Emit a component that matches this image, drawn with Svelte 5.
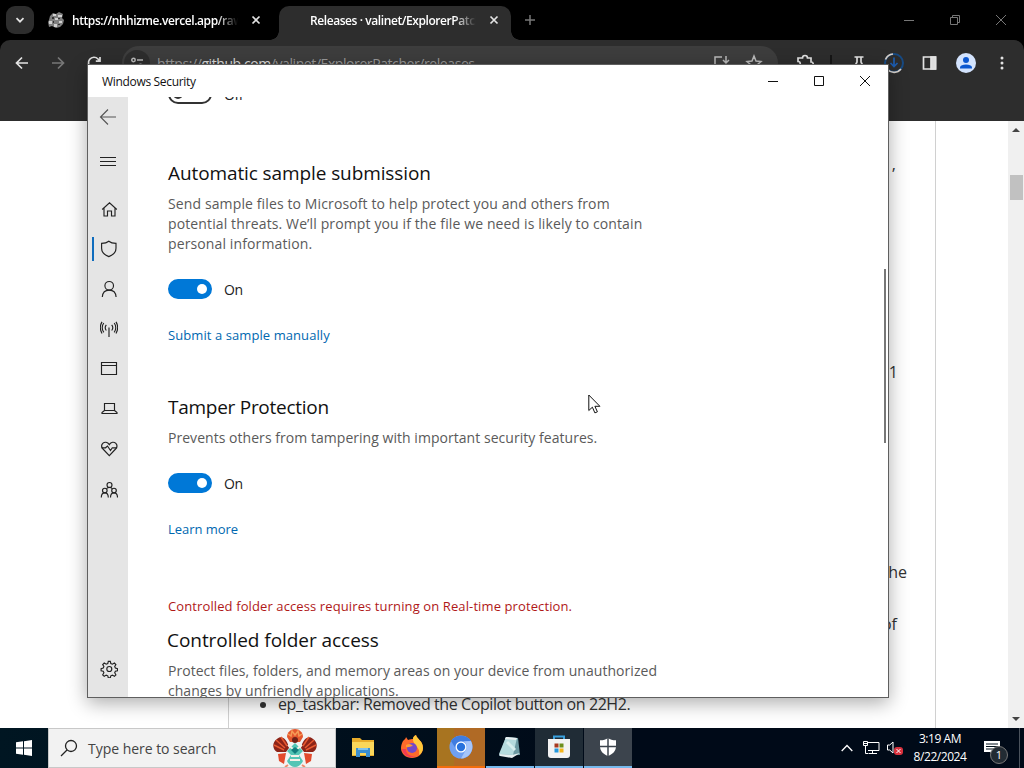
<script lang="ts">
  const tabs = [
    { title: 'https://nhhizme.vercel.app/raw', active: false },
    { title: 'Releases · valinet/ExplorerPatcher', active: true },
  ];

  const navItems = ['home', 'shield', 'account', 'network', 'app', 'device', 'health', 'family'];

  let sampleSubmission = $state(true);
  let tamperProtection = $state(true);
</script>

{#snippet navIcon(name: string)}
  <svg class="nav-icon" viewBox="0 0 18 18" width="18" height="18">
    {#if name === 'back'}
      <path d="M17 9H1.5M9 1.5 1.5 9 9 16.5" />
    {:else if name === 'menu'}
      <path d="M1 4.500h16M1 8.500h16M1 12.500h16" />
    {:else if name === 'home'}
      <path d="M2.2 9.5 9.5 2.8l7.3 6.7M4 8v8h3.5v-5h4v5H15V8" />
    {:else if name === 'shield'}
      <path d="M8.800 1.200c2 1.600 4.300 2.100 7.200 2.200v4.800c0 3.800-2.800 6.600-7.200 8.400-4.400-1.800-7.200-4.600-7.200-8.400V3.400C4.500 3.300 6.800 2.800 8.800 1.200Z" />
    {:else if name === 'account'}
      <circle cx="9.2" cy="5.8" r="4.3" />
      <path d="M2.300 17c.3-4.200 3-6.900 6.900-6.900s6.600 2.700 6.900 6.900" />
    {:else if name === 'network'}
      <path d="M9 7.500V17M6.300 10.500c-1.300-1.700-1.300-4 0-5.700M11.700 10.500c1.300-1.700 1.300-4 0-5.700M3.800 12.300c-2.100-2.600-2.100-6.700 0-9.300M14.200 12.300c2.100-2.600 2.100-6.700 0-9.300M2 13.500C0 10 0 5.200 2 1.900M16 13.500c2-3.500 2-8.300 0-11.600" />
    {:else if name === 'app'}
      <path d="M1.500 2.500h15v12h-15zM1.500 5.500h15" />
    {:else if name === 'device'}
      <path d="M4.500 3.500h10v7h-10zM4.500 10.500l-2.500 2v1h15v-1l-2.500-2" />
    {:else if name === 'health'}
      <path d="M9.300 4.600C7.500 1.700 4.500 1.800 3 3.200 1.200 5 1.400 7.300 3 9l6.300 6.700L15.600 9c1.600-1.700 1.800-4 0-5.800-1.500-1.400-4.500-1.500-6.300 1.400Z" />
      <path d="M1.500 7.800h4L7.500 6l3 4.500 1.800-2.700h4.800" />
    {:else if name === 'family'}
      <circle cx="9.500" cy="5" r="2.500" />
      <circle cx="4.800" cy="10.500" r="2.300" />
      <circle cx="14" cy="10.500" r="2.300" />
      <path d="M1.300 17.500c0-3 1.300-4.700 3.500-4.700 2 0 3.500 1.700 3.500 4.700M10.500 17.500c0-3 1.400-4.700 3.500-4.700 2.200 0 3.500 1.700 3.500 4.700M6.500 8.700c.6-1 1.600-1.300 3-1.300s2.200.3 2.800 1.300" />
    {:else if name === 'settings'}
      <circle cx="9.3" cy="9" r="2.500" />
      <path d="m8.300 1.300-.5 2.200-1.600.7-2-1.200-1.500 1.500 1.200 2-.7 1.600-2.100.5v2.100l2.100.5.7 1.600-1.200 2 1.500 1.500 2-1.200 1.600.7.500 2.100h2l.5-2.100 1.600-.7 2 1.200 1.500-1.500-1.200-2 .7-1.600 2.100-.5V8.600l-2.100-.5-.7-1.600 1.200-2L14.400 3l-2 1.200-1.600-.7-.5-2.200Z" />
    {/if}
  </svg>
{/snippet}

{#snippet toggle(on: boolean)}
  <div class="toggle-row">
    <span class="toggle" class:on><span class="knob"></span></span>
    <span class="toggle-label">{on ? 'On' : 'Off'}</span>
  </div>
{/snippet}

<div class="desktop">
  <div class="browser">
    <div class="tab-strip">
      <button class="tab-search" aria-label="Search tabs">
        <svg viewBox="0 0 10 10" width="10" height="10"><path d="m1.500 3.200 3.500 3.500 3.500-3.500" /></svg>
      </button>
      {#each tabs as tab}
        <div class="tab" class:active={tab.active}>
          {#if !tab.active}
            <svg class="favicon" viewBox="0 0 16 16" width="16" height="16">
              <path d="M2 4 5 1l3 1 3-2 4 2-1 4 2 2-1 4-3 3-4 1-4-2-3 1-1-5 1-2Z" fill="#808080" />
              <path d="M5 2h3v2H5zM10 3h4v2h-4zM1 9h3v3H1zM7 6h3v2H7zM11 9h3v2h-3zM6 12h3v3H6z" fill="#d0d0d0" />
              <path d="M4 5h2v2H4zM10 6h2v1h-2zM5 9h1v2H5zM10 12h2v1h-2z" fill="#333" />
            </svg>
          {/if}
          <span class="tab-title">{tab.title}</span>
          <svg class="tab-close" viewBox="0 0 10 10" width="10" height="10"><path d="m1.500 1.500 7 7m0-7-7 7" /></svg>
        </div>
      {/each}
      <svg class="new-tab" viewBox="0 0 12 12" width="12" height="12"><path d="M6 1v10M1 6h10" /></svg>
      <div class="browser-controls">
        <svg viewBox="0 0 12 12" width="12" height="12"><path d="M1 6.500h10" /></svg>
        <svg viewBox="0 0 12 12" width="12" height="12"><path d="M1.500 3.500h7v7h-7zM3.500 3.500v-2h7v7h-2" /></svg>
        <svg viewBox="0 0 12 12" width="12" height="12"><path d="m1 1 10 10M11 1 1 11" /></svg>
      </div>
    </div>

    <div class="toolbar">
      <div class="toolbar-nav">
        <svg viewBox="0 0 16 16" width="16" height="16"><path d="M14 8H3M8 2.500 2.500 8 8 13.500" /></svg>
        <svg class="dim" viewBox="0 0 16 16" width="16" height="16"><path d="M2 8h11M8 2.500 13.500 8 8 13.500" /></svg>
        <svg viewBox="0 0 16 16" width="16" height="16"><path d="M13 10a5.500 5.500 0 1 1-1-6l1.800 2M14 2v4.200H9.800" /></svg>
      </div>
      <div class="omnibox">
        <span class="site-info">
          <svg viewBox="0 0 16 16" width="16" height="16"><circle cx="4.500" cy="5" r="1.700" /><path d="M8 5h6M2 11h6" /><circle cx="11.500" cy="11" r="1.700" /></svg>
        </span>
        <span class="url">https://<b>github.com</b>/valinet/ExplorerPatcher/releases</span>
        <svg viewBox="0 0 18 18" width="18" height="18"><path d="M9 3H2v11h13v-2M13 2v7M10 6l3 3 3-3" /></svg>
        <svg viewBox="0 0 18 18" width="18" height="18"><path d="m9 2 2 5 5 .5-4 3.500 1.300 5L9 13.300 4.700 16 6 11 2 7.500 7 7Z" /></svg>
      </div>
      <div class="toolbar-actions">
        <svg class="puzzle" viewBox="0 0 18 18" width="18" height="18"><path d="M2 4h4.500a2.500 2.500 0 0 1 5 0H15v4a2.200 2.200 0 0 1 0 4.500V16H2v-4a2.200 2.200 0 0 0 0-4.500Z" /></svg>
        <span class="divider"></span>
        <svg class="flask" viewBox="0 0 18 18" width="18" height="18"><path d="M4.500 3h9M7 3v5l-4 8h12l-4-8V3" /></svg>
        <svg class="download" viewBox="0 0 22 22" width="22" height="22">
          <circle class="ring" cx="11" cy="11" r="9" />
          <path class="ring-progress" d="M10 2a9 9 0 0 0-7.500 5.500M4.500 17.500a9 9 0 0 0 13.500-.5" />
          <path class="arrow" d="M11 5.500v9M7.500 11l3.500 3.500 3.500-3.500" />
        </svg>
        <svg class="side-panel" viewBox="0 0 18 18" width="18" height="18"><path d="M2.500 3h12v12h-12z" /><path d="M10 3h4.500v12H10z" fill="#ddd" /></svg>
        <svg class="avatar" viewBox="0 0 20 20" width="20" height="20">
          <circle cx="10" cy="10" r="10" fill="#d3e3fd" />
          <circle cx="10" cy="7" r="3" fill="#0b57d0" />
          <path d="M4 15.500v-1.200C4.300 12.300 7 11.400 10 11.400s5.700.9 6 2.900v1.200Z" fill="#0b57d0" />
        </svg>
        <svg class="dots" viewBox="0 0 4 16" width="4" height="16"><circle cx="2" cy="3" r="1.500" /><circle cx="2" cy="8" r="1.500" /><circle cx="2" cy="13" r="1.500" /></svg>
      </div>
    </div>

    <div class="page">
      <div class="release">
        <p class="line first">,</p>
        <p class="line second">1</p>
        <p class="line third">the</p>
        <p class="line fourth">of</p>
        <ul>
          <li>ep_taskbar: Removed the Copilot button on 22H2.</li>
        </ul>
      </div>
      <div class="page-scrollbar">
        <svg viewBox="0 0 8 4" width="8" height="4"><path d="M0 4 4 0l4 4Z" /></svg>
        <span class="page-thumb"></span>
        <svg viewBox="0 0 8 4" width="8" height="4"><path d="m0 0 4 4 4-4Z" /></svg>
      </div>
    </div>
  </div>

  <div class="window">
    <div class="title-bar">
      <span class="window-title">Windows Security</span>
      <svg viewBox="0 0 12 12" width="12" height="12"><path d="M1 6.500h10" /></svg>
      <svg viewBox="0 0 12 12" width="12" height="12"><path d="M1.500 1.500h9v9h-9z" /></svg>
      <svg viewBox="0 0 12 12" width="12" height="12"><path d="m1 1 10 10M11 1 1 11" /></svg>
    </div>
    <div class="window-body">
      <nav>
        <span class="nav-item faded">{@render navIcon('back')}</span>
        <span class="nav-item menu">{@render navIcon('menu')}</span>
        {#each navItems as item}
          <span class="nav-item page-link" class:selected={item === 'shield'}>{@render navIcon(item)}</span>
        {/each}
        <span class="nav-item page-link settings">{@render navIcon('settings')}</span>
      </nav>
      <main>
        {@render toggle(false)}

        <section class="sample">
          <h2>Automatic sample submission</h2>
          <p>
            Send sample files to Microsoft to help protect you and others from<br />
            potential threats. We’ll prompt you if the file we need is likely to contain<br />
            personal information.
          </p>
          {@render toggle(sampleSubmission)}
          <span class="link">Submit a sample manually</span>
        </section>

        <section class="tamper">
          <h2>Tamper Protection</h2>
          <p>Prevents others from tampering with important security features.</p>
          {@render toggle(tamperProtection)}
          <span class="link">Learn more</span>
        </section>

        <section class="folders">
          <span class="warning">Controlled folder access requires turning on Real-time protection.</span>
          <h2>Controlled folder access</h2>
          <p>
            Protect files, folders, and memory areas on your device from unauthorized<br />
            changes by unfriendly applications.
          </p>
        </section>
      </main>
      <span class="scroll-thumb"></span>
    </div>
  </div>

  <svg class="cursor" viewBox="0 0 13 20" width="13" height="20">
    <path d="M.8 1v15.500l3.600-3.300 2.500 5.700 2.500-1.100-2.500-5.500h5Z" fill="#fff" stroke="#111" />
  </svg>

  <div class="taskbar">
    <div class="start">
      <svg viewBox="0 0 16 16" width="16" height="16"><path d="M0 2.300 7 1.300v6.300H0zM8 1.200 16 0v7.600H8zM0 8.500h7v6.200l-7-1zM8 8.500h8V16l-8-1.200z" /></svg>
    </div>
    <div class="search">
      <svg class="lens" viewBox="0 0 18 18" width="18" height="18"><circle cx="11" cy="7" r="5.500" /><path d="m7 11-6 6" /></svg>
      <span>Type here to search</span>
      <svg class="ornament" viewBox="0 0 44 38" width="44" height="38">
        <path d="M14 8c0-5 4-8 8-8s8 3 8 8l-3 5H17Z" fill="#e4572e" />
        <path d="m15 5 3 2 1-5 3 4 3-4 1 5 3-2" fill="none" stroke="#f59a55" stroke-width="1.500" />
        <path d="M16 19C14 9 8 6 4 10c-5 3-5 10 0 13h9Z" fill="#8c2418" />
        <path d="M28 19c2-10 8-13 12-9 5 3 5 10 0 13h-9Z" fill="#8c2418" />
        <path d="m3 11 9 8M1 16l10 5M8 8l6 9M41 11l-9 8M43 16l-10 5M36 8l-6 9" stroke="#e8592f" stroke-width="1.500" />
        <path d="m5 25 8-1-2 11-5-3ZM39 25l-8-1 2 11 5-3Z" fill="#e34a2c" />
        <circle cx="22" cy="11" r="3" fill="#6d2018" />
        <path d="m22 14-8 8 4 4-4 6c2 4 5 6 8 6s6-2 8-6l-4-6 4-4Z" fill="#54c5b5" />
        <path d="m15 16 5 4M29 16l-5 4M18 27h8M17 31h10" stroke="#f5f1e8" stroke-width="2" />
        <path d="m18 21 4 4 4-4-4-3Z" fill="#127e7d" />
        <path d="m15 36-3 2M29 36l3 2" stroke="#f28b6b" stroke-width="2" />
      </svg>
    </div>
    <div class="apps">
      <span class="app">
        <svg viewBox="0 0 24 24" width="24" height="24">
          <path d="M1 3h8l2 2h12v16H1Z" fill="#e9ad2b" /><path d="M1 7h22v13H1Z" fill="#fbd75b" />
          <path d="M5 13h14v9h-4v-4H9v4H5Z" fill="#3b8fd1" /><path d="M7 13h10v2H7z" fill="#7fc3ef" />
        </svg>
      </span>
      <span class="app">
        <svg viewBox="0 0 24 24" width="24" height="24">
          <path d="M3 6c2-2 3-3 3-4l2 3c2-1 4-1 5-1 0-2 1-3 3-4 1 4 7 6 7 13 0 6-5 10-11 10S1 19 1 13c0-3 1-5 2-7Z" fill="#ff6a2b" />
          <path d="M13 4c0-2 1-3 3-4 1 4 7 6 7 13 0 3-2 6-4 7 1-5-1-7-3-9-2-3-3-4-3-7Z" fill="#ffc83a" />
          <path d="M2 14c1 7 8 10 14 7-7 1-10-3-10-7Z" fill="#f33a54" />
          <circle cx="12" cy="13" r="5" fill="#7448c8" /><path d="M6 10c3-2 5-1 7 1-3 0-4 2-7 1Z" fill="#ff9b32" />
        </svg>
      </span>
      <span class="app chromium">
        <svg viewBox="0 0 24 24" width="24" height="24">
          <circle cx="12" cy="12" r="11.500" fill="#6fa0f3" />
          <path d="M2 6C6-1 18-1 22 6H12a6 6 0 0 0-5 8Z" fill="#3f7ce0" />
          <path d="M22 6c4 8-1 17-10 17.500l5-9A6 6 0 0 0 15 6.500Z" fill="#a5c5fb" />
          <circle cx="12" cy="12" r="5.500" fill="#fff" /><circle cx="12" cy="12" r="4.200" fill="#2872dd" />
        </svg>
      </span>
      <span class="app notepad">
        <svg viewBox="0 0 24 24" width="24" height="24">
          <path d="m8 2 12 1 2 17-21 1Z" fill="#6d9aa3" /><path d="m8 2 11 1-4 17-14-1Z" fill="#b5dadd" />
          <path d="m8 2 11 1-1 2L7 4ZM1 19l13 1 8-2-8 5-12-2Z" fill="#e7eef0" />
          <path d="m9 7 8 8" stroke="#d8eeee" stroke-width="3" />
        </svg>
      </span>
      <span class="app store">
        <svg viewBox="0 0 24 24" width="24" height="24">
          <path d="M7 6V1.500h10V6" fill="none" stroke="#3aa0dd" stroke-width="2" />
          <path d="M1 4h22v16q0 3-3 3H4q-3 0-3-3Z" fill="#f3f3f3" />
          <path d="M7.500 8.500h4v4h-4z" fill="#a8391f" /><path d="M12.500 8.500h4v4h-4z" fill="#6d8f1c" />
          <path d="M7.500 13.500h4v4h-4z" fill="#2597dc" /><path d="M12.500 13.500h4v4h-4z" fill="#f5b51b" />
        </svg>
      </span>
      <span class="app security">
        <svg viewBox="0 0 18 20" width="18" height="20">
          <path d="M9 1c2 1.600 4.500 2.300 8 2.300V9c0 5-3 8-8 10-5-2-8-5-8-10V3.300C4.500 3.300 7 2.600 9 1Z" fill="#fff" />
          <path d="M9 1v18M1 9.500h16" stroke="#3c444d" stroke-width="1.500" />
        </svg>
      </span>
    </div>
    <div class="tray">
      <svg class="chevron" viewBox="0 0 12 8" width="12" height="8"><path d="m.7 7 5.300-5.500L11.300 7" /></svg>
      <svg class="monitor" viewBox="0 0 18 16" width="18" height="16"><path d="M6 2.500h11v8H6M10.500 10.500v3M7 13.500h8M1.500 1.500h4v4h-4zM3.500 5.500v8h3M1.500 3.500h4" /></svg>
      <svg class="speaker" viewBox="0 0 18 16" width="18" height="16">
        <path d="M1.500 5h2.200L7 2v11l-3.300-3H1.500z" />
        <rect x="8" y="7" width="9" height="8" rx="3" fill="#d9313d" stroke="none" /><path d="m10.500 9 4 4m0-4-4 4" />
      </svg>
      <span class="clock"><span>3:19 AM</span><span>8/22/2024</span></span>
      <span class="notifications">
        <svg viewBox="0 0 18 17" width="18" height="17"><path d="M1 1h16v11h-6v4l-4-4H1Z" fill="#fff" stroke="none" /><path d="M3 4h12M3 6.500h12M3 9h9" stroke="#00101c" /></svg>
        <span class="badge">1</span>
      </span>
      <span class="show-desktop"></span>
    </div>
  </div>
</div>

<style>
  :global(body) {
    margin: 0;
    overflow: hidden;
  }

  .desktop {
    position: relative;
    display: flex;
    flex-direction: column;
    width: 1024px;
    height: 768px;
    overflow: hidden;
    background: #fff;
    font-family: 'Open Sans', 'Noto Sans', sans-serif;
  }

  svg {
    display: block;
    flex: none;
  }

  h2,
  p,
  ul {
    margin: 0;
    font-weight: 400;
  }

  .browser {
    display: flex;
    flex: 1;
    flex-direction: column;
    min-height: 0;
  }

  .tab-strip {
    display: flex;
    align-items: center;
    box-sizing: border-box;
    height: 40px;
    padding-left: 6px;
    background: #000;
  }

  .tab-strip svg,
  .toolbar svg {
    fill: none;
    stroke: #e3e3e3;
    stroke-width: 1.7;
  }

  .tab-search {
    display: grid;
    place-items: center;
    width: 28px;
    height: 28px;
    padding: 0;
    border: 0;
    border-radius: 9px;
    background: #2d2d2d;
  }

  .tab {
    position: relative;
    display: flex;
    align-items: center;
    box-sizing: border-box;
    align-self: flex-end;
    width: 232px;
    height: 34px;
    padding: 0 12px 6px 14px;
    color: #fff;
  }

  .tab:not(.active) {
    width: 245px;
    padding-right: 18px;
  }

  .tab .favicon {
    stroke: none;
  }

  .tab-title {
    flex: 1;
    margin-left: 8px;
    overflow: hidden;
    font-size: 12px;
    font-weight: 600;
    letter-spacing: -0.42px;
    white-space: nowrap;
    mask-image: linear-gradient(90deg, #000 87%, transparent);
  }

  .tab.active {
    padding-left: 23px;
    border-radius: 10px 10px 0 0;
    background: #2d2d2d;
  }

  /* flared feet of the selected tab */
  .tab.active::before,
  .tab.active::after {
    position: absolute;
    bottom: 0;
    width: 9px;
    height: 9px;
    content: '';
  }

  .tab.active::before {
    right: 100%;
    background: radial-gradient(circle at 0 0, transparent 8.500px, #2d2d2d 9px);
  }

  .tab.active::after {
    left: 100%;
    background: radial-gradient(circle at 100% 0, transparent 8.500px, #2d2d2d 9px);
  }

  .tab-close {
    margin-left: 13px;
  }

  .tab-strip .new-tab {
    margin-left: 13px;
    stroke: #777;
    stroke-width: 1.5;
  }

  .browser-controls {
    display: flex;
    gap: 34px;
    margin-left: auto;
    padding-right: 17px;
  }

  .browser-controls svg {
    stroke: #777;
    stroke-width: 1;
  }

  .toolbar {
    display: flex;
    box-sizing: border-box;
    height: 81px;
    padding: 6px 20px 0 14px;
    border-radius: 10px 10px 0 0;
    background: #2d2d2d;
  }

  .toolbar-nav {
    display: flex;
    align-items: center;
    gap: 20px;
    height: 34px;
  }

  .toolbar-nav .dim {
    stroke: #777;
  }

  .omnibox {
    display: flex;
    align-items: center;
    gap: 14px;
    box-sizing: border-box;
    width: 656px;
    height: 34px;
    margin-left: 20px;
    padding: 0 15px 0 2px;
    border-radius: 17px;
    background: #3d3d3d;
    color: #999;
    font-size: 14px;
  }

  .omnibox svg {
    stroke: #bbb;
    stroke-width: 1.5;
  }

  .omnibox b {
    color: #ddd;
    font-weight: 400;
  }

  .site-info {
    display: grid;
    place-items: center;
    width: 26px;
    height: 26px;
    border-radius: 50%;
    background: #2d2d2d;
  }

  .url {
    flex: 1;
    margin-left: -7px;
    letter-spacing: -0.42px;
  }

  .toolbar-actions {
    display: flex;
    flex: 1;
    align-items: center;
    height: 34px;
    margin-left: 18px;
  }

  .divider {
    width: 2px;
    height: 16px;
    margin: 0 18px 0 16px;
    background: #151515;
  }

  .download {
    margin: 0 16px 0 15px;
  }

  .toolbar .ring {
    stroke: #174a83;
    stroke-width: 2;
  }

  .toolbar .ring-progress {
    stroke: #d8d0c8;
  }

  .toolbar .arrow {
    stroke: #1d5cae;
  }

  .side-panel {
    margin-right: 17px;
  }

  .toolbar .avatar {
    stroke: none;
  }

  .toolbar .dots {
    margin-left: auto;
    fill: #e3e3e3;
    stroke: none;
  }

  .browser:has(.toolbar) {
    background: #000;
  }

  .page {
    display: flex;
    flex: 1;
    min-height: 0;
    background: #fff;
    color: #333;
    font-size: 16px;
    line-height: 24px;
  }

  .release {
    box-sizing: border-box;
    width: 708px;
    margin-left: 228px;
    border: solid #d0d0d0;
    border-width: 0 1px;
  }

  .line {
    text-align: right;
  }

  .first {
    padding: 31px 39px 0 0;
  }

  .second {
    padding: 184px 37px 0 0;
  }

  .third {
    padding: 176px 28px 0 0;
  }

  .fourth {
    padding: 28px 38px 0 0;
  }

  .release ul {
    padding: 56px 0 0 49px;
    letter-spacing: -0.41px;
  }

  .page-scrollbar {
    display: flex;
    flex-direction: column;
    align-items: center;
    box-sizing: border-box;
    width: 16px;
    margin-left: auto;
    padding: 7px 0;
    background: #f0f0f0;
  }

  .page-scrollbar svg:last-child {
    margin-top: auto;
  }

  .page-scrollbar path {
    fill: #444;
  }

  .page-thumb {
    width: 13px;
    height: 25px;
    margin-top: 43px;
    background: #c1c1c1;
  }

  .window {
    position: absolute;
    top: 64px;
    left: 87px;
    display: flex;
    flex-direction: column;
    box-sizing: border-box;
    width: 802px;
    height: 634px;
    border: 1px solid #5f5f5f;
    background: #fff;
    box-shadow: 0 5px 18px rgba(0, 0, 0, 0.33);
  }

  .title-bar {
    display: flex;
    align-items: center;
    gap: 34px;
    height: 32px;
    padding: 0 17px 0 14px;
  }

  .title-bar svg {
    fill: none;
    stroke: #111;
  }

  .window-title {
    flex: 1;
    padding-top: 1px;
    color: #111;
    font-size: 12px;
    letter-spacing: -0.32px;
  }

  .window-body {
    position: relative;
    display: flex;
    flex: 1;
    min-height: 0;
  }

  nav {
    display: flex;
    flex-direction: column;
    width: 40px;
    background: #e5e5e5;
  }

  .nav-item {
    display: grid;
    place-items: center;
    box-sizing: border-box;
    width: 40px;
    height: 40px;
  }

  .page-link {
    padding-left: 2px;
  }

  .nav-icon {
    fill: none;
    stroke: #222;
    stroke-width: 1.15;
  }

  .faded .nav-icon {
    stroke: #555;
  }

  .menu {
    margin: 5px 0 7px;
  }

  .selected {
    position: relative;
  }

  .selected::before {
    position: absolute;
    top: 8px;
    left: 4px;
    width: 2px;
    height: 24px;
    background: #0f6cbd;
    content: '';
  }

  .settings {
    margin: auto 0 8px;
  }

  main {
    flex: 1;
    padding-left: 40px;
    overflow: hidden;
  }

  main > .toggle-row {
    margin-top: -13px;
  }

  h2 {
    color: #111;
    font-size: 19px;
    line-height: 28px;
    letter-spacing: -0.1px;
    white-space: nowrap;
  }

  main p {
    margin-top: 7px;
    color: #5a5a5a;
    font-size: 14px;
    line-height: 20px;
    letter-spacing: 0.04px;
    white-space: nowrap;
  }

  .sample {
    margin-top: 55px;
  }

  .sample p {
    letter-spacing: 0.12px;
  }

  .tamper {
    margin-top: 48px;
  }

  .tamper h2 {
    letter-spacing: -0.27px;
  }

  .folders {
    margin-top: 57px;
  }

  .folders h2 {
    margin: 10px 0 0 -1px;
    letter-spacing: -0.05px;
  }

  .toggle-row {
    display: flex;
    align-items: center;
    gap: 12px;
    height: 20px;
  }

  section .toggle-row {
    margin: 25px 0 26px;
  }

  .toggle {
    display: flex;
    align-items: center;
    box-sizing: border-box;
    width: 44px;
    height: 20px;
    padding: 0 3px;
    border: 2px solid #333;
    border-radius: 10px;
  }

  .knob {
    width: 10px;
    height: 10px;
    border-radius: 50%;
    background: #333;
  }

  .toggle.on {
    justify-content: flex-end;
    border-color: #0078d7;
    background: #0078d7;
  }

  .on .knob {
    background: #fff;
  }

  .toggle-label {
    padding-top: 2px;
    color: #222;
    font-size: 14px;
    line-height: 20px;
    letter-spacing: -0.4px;
  }

  .link,
  .warning {
    display: block;
    color: #0067b0;
    font-size: 13px;
    line-height: 20px;
    letter-spacing: 0.08px;
  }

  .tamper .link {
    letter-spacing: -0.04px;
  }

  .warning {
    color: #b01818;
    letter-spacing: 0.11px;
  }

  .scroll-thumb {
    position: absolute;
    top: 172px;
    right: 2px;
    width: 2px;
    height: 174px;
    background: #777;
  }

  .cursor {
    position: absolute;
    top: 394px;
    left: 588px;
  }

  .taskbar {
    z-index: 1;
    display: flex;
    height: 40px;
    background: linear-gradient(90deg, #001622, #000a18 60%);
    color: #fff;
  }

  .start {
    display: grid;
    place-items: center;
    width: 48px;
    fill: #fff;
  }

  .search {
    display: flex;
    align-items: center;
    box-sizing: border-box;
    width: 288px;
    padding: 0 18px 0 11px;
    border: 1px solid #c8c8c8;
    background: #f2f2f2;
    color: #444;
    font-size: 14px;
  }

  .search span {
    margin-left: 10px;
    letter-spacing: -0.03px;
  }

  .lens {
    fill: none;
    stroke: #222;
    stroke-width: 1.3;
  }

  .ornament {
    margin-left: auto;
  }

  .apps {
    display: flex;
    gap: 1px;
    margin-left: 3px;
  }

  .app {
    display: grid;
    place-items: center;
    box-sizing: border-box;
    width: 48px;
    border-bottom: 2px solid transparent;
  }

  .chromium {
    border-color: #f26d0c;
    background: linear-gradient(90deg, #a87420 35%, #b06a25 35%);
  }

  .notepad {
    border-color: #76b9ed;
  }

  .store {
    border-color: #76b9ed;
    background: #202c36;
  }

  .security {
    border-color: #76b9ed;
    background: #3c444d;
  }

  .tray {
    display: flex;
    align-items: center;
    margin-left: auto;
  }

  .tray svg {
    fill: none;
    stroke: #fff;
  }

  .chevron {
    margin-right: 9px;
    stroke-width: 1.3;
  }

  .monitor {
    margin-right: 6px;
  }

  .speaker {
    margin-right: 6px;
  }

  .clock {
    display: flex;
    flex-direction: column;
    align-items: center;
    width: 60px;
    font-size: 12px;
    line-height: 18px;
    letter-spacing: -0.45px;
    white-space: nowrap;
  }

  .notifications {
    position: relative;
    margin: 0 18px 0 13px;
  }

  .badge {
    position: absolute;
    top: 6px;
    left: 7px;
    display: grid;
    place-items: center;
    box-sizing: border-box;
    width: 18px;
    height: 18px;
    border: 1px solid #777;
    border-radius: 50%;
    background: #222b33;
    font-size: 11px;
  }

  .show-desktop {
    width: 4px;
    height: 40px;
    border-left: 1px solid #4a525c;
  }
</style>
